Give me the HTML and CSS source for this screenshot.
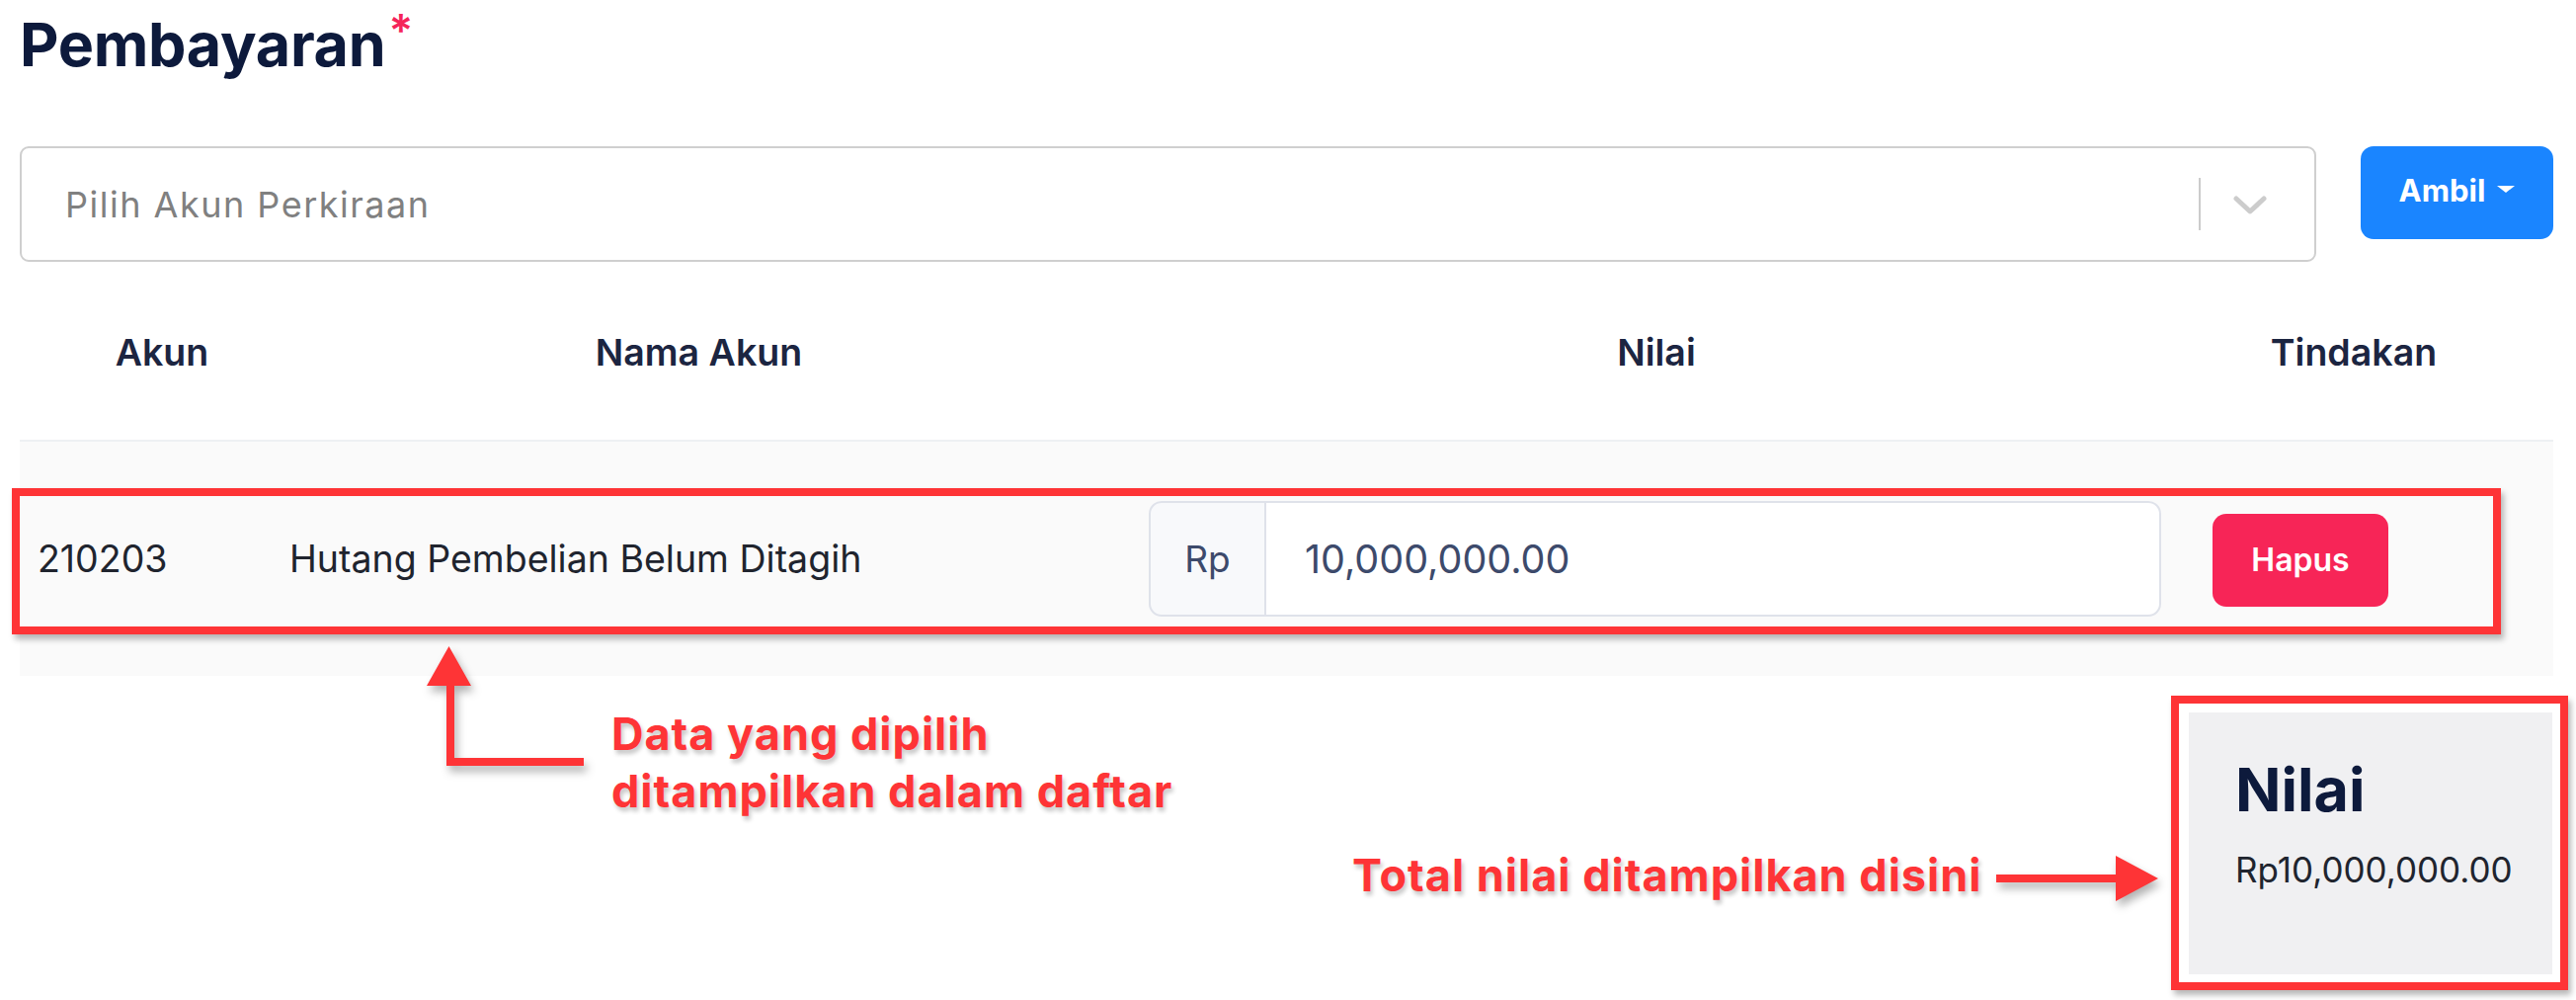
FILE: index.html
```html
<!DOCTYPE html>
<html lang="id">
<head>
<meta charset="utf-8">
<title>Pembayaran</title>
<link rel="stylesheet" href="styles.css">
</head>
<body>
<div class="page">
  <h1 class="title">Pembayaran<span class="req">*</span></h1>

  <div class="picker">
    <div class="select">
      <span class="placeholder">Pilih Akun Perkiraan</span>
      <span class="indicators">
        <span class="sep"></span>
        <svg class="chevron" width="34" height="20" viewBox="0 0 34 20"><path d="M3 3 L17 16 L31 3" fill="none" stroke="#cccccc" stroke-width="5" stroke-linecap="round" stroke-linejoin="round"/></svg>
      </span>
    </div>
    <button class="btn-ambil">Ambil<span class="caret"></span></button>
  </div>

  <div class="table">
    <div class="thead cols">
      <div class="th th-first">Akun</div>
      <div class="th">Nama Akun</div>
      <div class="th">Nilai</div>
      <div class="th th-last">Tindakan</div>
    </div>
    <div class="tbody">
      <div class="tr cols">
        <div class="td">210203</div>
        <div class="td">Hutang Pembelian Belum Ditagih</div>
        <div class="td td-input">
          <div class="input-group">
            <span class="addon">Rp</span>
            <span class="input">10,000,000.00</span>
          </div>
        </div>
        <div class="td td-action">
          <button class="btn-hapus">Hapus</button>
        </div>
      </div>
    </div>
  </div>

  <div class="summary">
    <div class="card">
      <h2 class="card-title">Nilai</h2>
      <p class="card-value">Rp10,000,000.00</p>
    </div>
  </div>

  <div class="mark mark-row"></div>
  <div class="mark mark-card"></div>

  <svg class="arrow arrow-up" width="200" height="150" viewBox="420 645 200 150">
    <g fill="#fe3436">
      <polygon points="432,694 477,694 454.5,654"/>
      <rect x="452" y="690" width="8" height="85"/>
      <rect x="452" y="767" width="139" height="8"/>
    </g>
  </svg>
  <p class="note note-1">Data yang dipilih<br>ditampilkan dalam daftar</p>

  <svg class="arrow arrow-right" width="200" height="60" viewBox="2000 860 200 60">
    <g fill="#fe3436">
      <rect x="2021" y="885" width="125" height="8"/>
      <polygon points="2142,866 2142,912 2185,889"/>
    </g>
  </svg>
  <p class="note note-2">Total nilai ditampilkan disini</p>
</div>
</body>
</html>
```

FILE: styles.css
```css
* { box-sizing: border-box; }

html, body {
  margin: 0;
  padding: 0;
  background: #ffffff;
}

body {
  font-family: Inter, "Noto Sans", sans-serif;
  color: #222733;
}

.page {
  position: relative;
  width: 2608px;
  height: 1012px;
  padding: 0 23px 0 20px;
}

.title {
  margin: 0;
  padding-top: 8px;
  height: 148px;
  font-size: 61px;
  line-height: 74px;
  font-weight: 700;
  color: #0d1a3c;
  letter-spacing: -0.3px;
}

.req {
  color: #f5245a;
  font-size: 46px;
  font-weight: 600;
  vertical-align: top;
  position: relative;
  top: -14px;
  margin-left: 3px;
}

.picker {
  display: flex;
  align-items: flex-start;
  gap: 45px;
}

.select {
  flex: 1;
  height: 117px;
  border: 2px solid #cfcfcf;
  border-radius: 9px;
  display: flex;
  align-items: center;
  padding-left: 44px;
}

.placeholder {
  flex: 1;
  font-family: Inter, sans-serif;
  font-size: 36px;
  letter-spacing: 1.5px;
  color: #808080;
}

.indicators {
  display: flex;
  align-items: center;
  height: 100%;
}

.sep {
  width: 2px;
  height: 53px;
  background: #cccccc;
}

.chevron {
  margin: 2px 48px 0 33px;
}

.btn-ambil {
  width: 195px;
  height: 94px;
  border: 0;
  border-radius: 13px;
  background: #1a85ff;
  color: #ffffff;
  font-family: Inter, sans-serif;
  font-size: 31px;
  font-weight: 700;
  display: flex;
  align-items: center;
  justify-content: center;
  gap: 12px;
  padding: 0 0 6px 0;
}

.caret {
  width: 0;
  height: 0;
  border-left: 9px solid transparent;
  border-right: 9px solid transparent;
  border-top: 7px solid #ffffff;
  margin-bottom: 2px;
}

.cols {
  display: grid;
  grid-template-columns: 255px 865px 1074px 1fr;
}

.thead {
  height: 182px;
  align-items: center;
  border-bottom: 2px solid #eef0f3;
}

.th {
  text-align: center;
  font-size: 37.5px;
  font-weight: 600;
  color: #1c2541;
  padding-top: 2px;
}

.th-first { padding-left: 33px; }
.th-last { padding-right: 33px; }

.tbody {
  background: #fafafa;
}

.tr {
  height: 237px;
  align-items: center;
}

.td {
  padding-left: 18px;
  font-size: 37.5px;
  color: #20242e;
}

.td-input {
  padding-left: 23px;
  padding-right: 26px;
}

.input-group {
  display: flex;
  height: 117px;
}

.addon {
  width: 119px;
  display: flex;
  align-items: center;
  justify-content: center;
  background: #f8f9fb;
  border: 2px solid #dfe2ea;
  border-radius: 13px 0 0 13px;
  font-size: 37px;
  color: #3d4a6b;
}

.input {
  flex: 1;
  display: flex;
  align-items: center;
  background: #ffffff;
  border: 2px solid #dfe2ea;
  border-left: 0;
  border-radius: 0 13px 13px 0;
  padding-left: 39px;
  font-size: 39.5px;
  color: #3d4a6b;
}

.td-action {
  padding-left: 26px;
}

.btn-hapus {
  width: 178px;
  height: 94px;
  border: 0;
  border-radius: 14px;
  background: #f72557;
  color: #ffffff;
  font-family: Inter, sans-serif;
  font-size: 32px;
  font-weight: 600;
  margin-top: 2px;
}

.summary {
  display: flex;
  justify-content: flex-end;
  padding-top: 37px;
  padding-right: 1px;
}

.card {
  width: 368px;
  height: 265px;
  background: #f0f0f2;
  padding: 41px 20px 0 47px;
}

.card-title {
  margin: 0;
  font-size: 61px;
  line-height: 74px;
  font-weight: 700;
  color: #0d1a3c;
}

.card-value {
  margin: 24px 0 0 0;
  font-size: 35px;
  line-height: 40px;
  color: #20242e;
}

.mark {
  position: absolute;
  border: 8px solid #fe3436;
  box-shadow: 3px 5px 6px rgba(0, 0, 0, 0.28);
}

.mark-row {
  left: 12px;
  top: 494px;
  width: 2520px;
  height: 148px;
}

.mark-card {
  left: 2198px;
  top: 704px;
  width: 402px;
  height: 298px;
}

.arrow {
  position: absolute;
  overflow: visible;
  filter: drop-shadow(3px 6px 4px rgba(0, 0, 0, 0.3));
}

.arrow-up {
  left: 420px;
  top: 645px;
}

.arrow-right {
  left: 2000px;
  top: 860px;
}

.note {
  position: absolute;
  margin: 0;
  font-family: Inter, sans-serif;
  font-size: 45px;
  line-height: 58px;
  font-weight: 700;
  letter-spacing: 1px;
  color: #fe3436;
  text-shadow: 2px 4px 4px rgba(0, 0, 0, 0.22);
  white-space: nowrap;
}

.note-1 {
  left: 619px;
  top: 714px;
}

.note-2 {
  left: 1369px;
  top: 857px;
}
```
